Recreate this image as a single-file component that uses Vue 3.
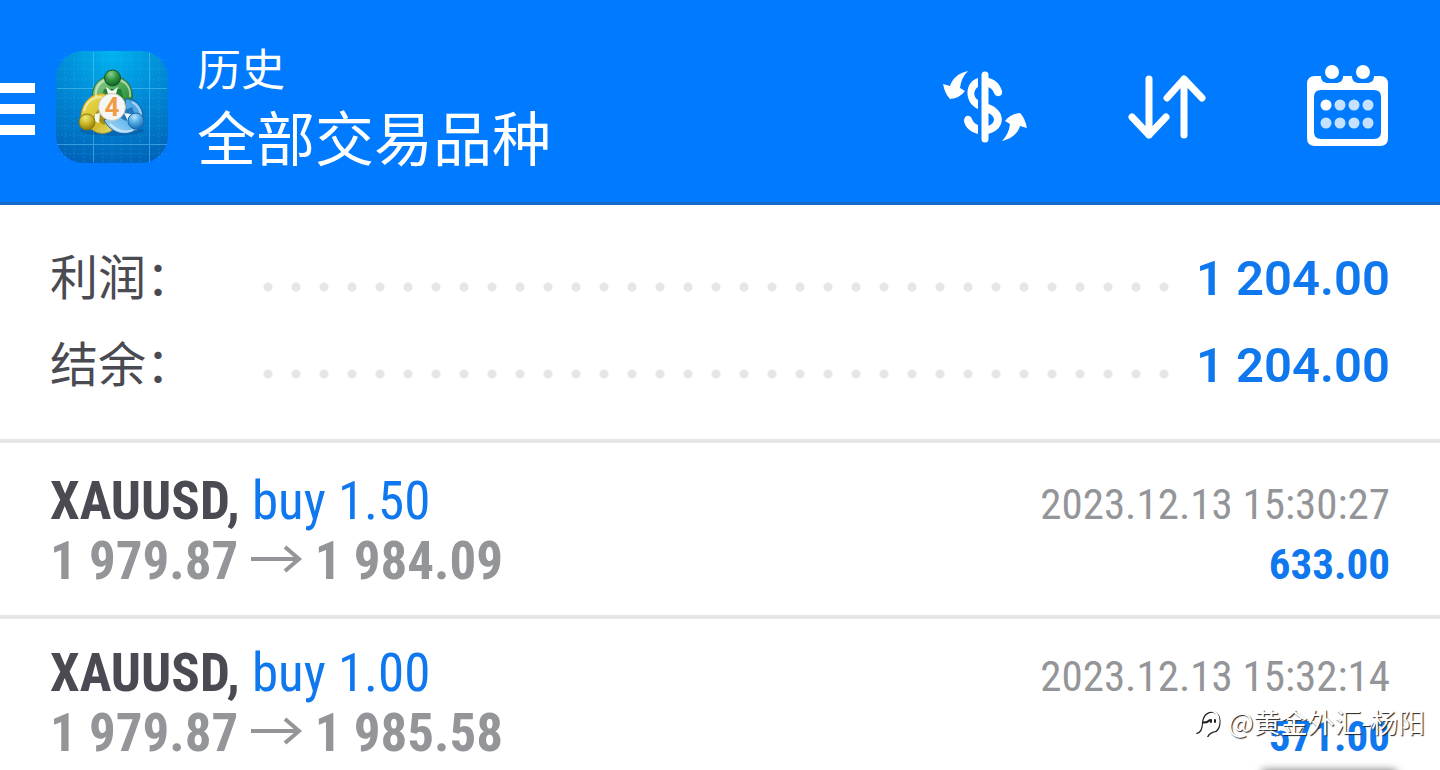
<template>
  <div class="app">
    <header class="toolbar">
      <button class="menu" type="button" aria-label="菜单">
        <svg width="36" height="60" viewBox="0 0 36 60" fill="#fff">
          <rect y="6" width="35" height="10"/>
          <rect y="27" width="35" height="10"/>
          <rect y="48" width="35" height="10"/>
        </svg>
      </button>

      <svg class="logo" width="112" height="112" viewBox="0 0 112 112" aria-hidden="true">
        <defs>
          <radialGradient id="logo-bg" cx="0.5" cy="0" r="1.05">
            <stop offset="0" stop-color="#00b4f0"/>
            <stop offset="0.5" stop-color="#0088d4"/>
            <stop offset="1" stop-color="#0062b8"/>
          </radialGradient>
          <linearGradient id="green" x1="0" y1="0" x2="1" y2="1">
            <stop offset="0" stop-color="#a4d8a0"/>
            <stop offset="0.5" stop-color="#4aa853"/>
            <stop offset="1" stop-color="#187a2c"/>
          </linearGradient>
          <linearGradient id="yellow" x1="0" y1="0" x2="1" y2="1">
            <stop offset="0" stop-color="#f0df4e"/>
            <stop offset="0.6" stop-color="#d2bb2c"/>
            <stop offset="1" stop-color="#f2eda0"/>
          </linearGradient>
          <linearGradient id="blue" x1="1" y1="0" x2="0" y2="1">
            <stop offset="0" stop-color="#3d9ade"/>
            <stop offset="0.5" stop-color="#62b4ea"/>
            <stop offset="1" stop-color="#b4e2fa"/>
          </linearGradient>
          <radialGradient id="head-green" cx="0.4" cy="0.25" r="0.8">
            <stop offset="0" stop-color="#8fd08d"/>
            <stop offset="0.5" stop-color="#2e9440"/>
            <stop offset="1" stop-color="#0d5a20"/>
          </radialGradient>
          <radialGradient id="head-yellow" cx="0.4" cy="0.25" r="0.8">
            <stop offset="0" stop-color="#f4e878"/>
            <stop offset="0.5" stop-color="#c8b526"/>
            <stop offset="1" stop-color="#84720a"/>
          </radialGradient>
          <radialGradient id="head-blue" cx="0.4" cy="0.25" r="0.8">
            <stop offset="0" stop-color="#b8e4fc"/>
            <stop offset="0.5" stop-color="#4aa6e2"/>
            <stop offset="1" stop-color="#1466ae"/>
          </radialGradient>
        </defs>
        <rect width="112" height="112" rx="27" fill="url(#logo-bg)"/>
        <g stroke="#5cc4f4" stroke-dasharray="2 2" opacity="0.2">
          <path v-for="p in minorGrid" :key="'m' + p" :d="`M${p} 1V111M1 ${p}H111`"/>
        </g>
        <path d="M37.500 1V111M93.500 1V111M1 37.500H111M1 93.500H111" stroke="#6ccaf6" opacity="0.5"/>
        <ellipse cx="56" cy="80" rx="32" ry="5" fill="#04498c" opacity="0.35"/>
        <path d="M37 54C34 41 39 28 51 26H62C74 29 79 41 75 55L64 62H48Z" fill="url(#green)" stroke="#2d6a24"/>
        <path d="M45 50L48 38H65L68 50L56 58Z" fill="#1d7f35"/>
        <path d="M49 43C38 41 26 49 25 66C26 73 32 77 37 79C43 84 52 83 58 78L68 66L50 62Z" fill="url(#yellow)" stroke="#b99c28"/>
        <path d="M37 66L44 56L56 66L48 74Z" fill="#a88d14"/>
        <path d="M69 48C79 47 87 55 87 66C88 74 84 79 78 80C68 86 55 82 48 69L60 64L70 60Z" fill="url(#blue)" stroke="#1a5fa4"/>
        <path d="M67 60L76 56L79 63L70 70L63 66Z" fill="#2278c0"/>
        <path d="M50 36L56 40L62 36L60 43H52ZM39 63L44 62L43 72L38 70ZM68 62L75 63L73 72Z" fill="#f4f8f2"/>
        <path d="M28 60C30 51 37 46 46 46M40 46C39 36 44 31 50 29M63 29C71 31 75 38 74 46M76 51C82 54 85 60 85 65M54 73C60 80 70 82 77 79" fill="none" stroke="#fff" stroke-width="2" opacity="0.5"/>
        <circle cx="56.500" cy="27" r="8" fill="url(#head-green)" stroke="#0d5522"/>
        <circle cx="31" cy="71" r="8" fill="url(#head-yellow)" stroke="#8a780c"/>
        <circle cx="80" cy="70" r="8" fill="url(#head-blue)" stroke="#1768ae"/>
        <circle cx="56" cy="56" r="13.500" fill="#f5f6f6" stroke="#cfc9ad"/>
        <text x="56" y="65" text-anchor="middle" class="logo-num">4</text>
      </svg>

      <div class="titles">
        <p class="section">历史</p>
        <h1 class="symbol">全部交易品种</h1>
      </div>

      <nav class="actions">
        <button type="button" aria-label="货币">
          <svg width="84" height="74" viewBox="0 0 84 74">
            <path d="M42 5V69" stroke="#fff" stroke-width="7" stroke-linecap="round"/>
            <path d="M35 8C21 12 21 33 35 39V30C30 27 30 20 35 17ZM45 8C52 9 57 14 59 21C60 27 53 28 51 23C50 20 48 18 45 17ZM45 34C64 40 63 60 45 64V56C53 53 53 46 45 43ZM35 64C27 62 22 57 21 51C21 45 27 44 29 49C30 52 32 54 35 55Z" fill="#fff"/>
            <g fill="#fff">
              <path d="M25 1C15 3 9 9 7 16L0 14Q2 24 7 29Q17 28 22 21L17 18Q18 8 25 1Z"/>
              <path d="M25 1C15 3 9 9 7 16L0 14Q2 24 7 29Q17 28 22 21L17 18Q18 8 25 1Z" transform="rotate(180 42 36)"/>
            </g>
          </svg>
        </button>
        <button type="button" aria-label="排序">
          <svg width="78" height="68" viewBox="0 -2 78 68" fill="none" stroke="#fff" stroke-width="7" stroke-linecap="round" stroke-linejoin="round">
            <path d="M21 4V60M4 42L21 60L38 42M56 60V4M39 23L56 4L74 23"/>
          </svg>
        </button>
        <button type="button" aria-label="日期">
          <svg width="81" height="84" viewBox="0 0 81 84">
            <path d="M8 11H14C14 16 17 18 21 18H29C33 18 36 16 36 11H45C45 16 48 18 52 18H60C64 18 67 16 67 11H73Q81 11 81 19V73Q81 81 73 81H8Q0 81 0 73V19Q0 11 8 11ZM14 25Q7 25 7 32V67Q7 74 14 74H67Q74 74 74 67V32Q74 25 67 25Z" fill="#fff" fill-rule="evenodd"/>
            <circle cx="25" cy="7" r="7" fill="#fff"/>
            <circle cx="56" cy="7" r="7" fill="#fff"/>
            <circle v-for="(d, i) in calendarDots" :key="i" :cx="d.x" :cy="d.y" r="5.500" :fill="i === 0 ? '#fff' : '#c4e2ff'"/>
          </svg>
        </button>
      </nav>
    </header>

    <dl class="summary">
      <div v-for="row in summary" :key="row.label" class="summary-row">
        <dt>{{ row.label }}</dt>
        <dd class="leader" aria-hidden="true"></dd>
        <dd class="total">{{ row.value }}</dd>
      </div>
    </dl>

    <ul class="deals">
      <li v-for="deal in deals" :key="deal.time" class="deal">
        <div class="line">
          <span><b>{{ deal.symbol }},</b> <span class="side">{{ deal.side }}</span></span>
          <time>{{ deal.time }}</time>
        </div>
        <div class="line">
          <span class="prices">
            {{ deal.open }}
            <svg class="arrow" width="52" height="28" viewBox="0 0 52 28" fill="none" stroke="#949599" stroke-width="4">
              <path d="M0 14H48M34 2L48 14L34 26"/>
            </svg>
            {{ deal.close }}
          </span>
          <span class="profit">{{ deal.profit }}</span>
        </div>
      </li>
    </ul>

    <div class="sheet-edge"></div>
    <div class="watermark">
      <svg width="26" height="30" viewBox="0 0 26 30" fill="none" stroke-linecap="round">
        <path d="M1 26C5 25 6 22 6 16C7 8 12 4 18 5C25 8 25 20 20 24C16 25 13 26 12 29M6 15C9 16 12 15 14 13M15 13V15M19 13V15" stroke="#222" stroke-width="2"/>
        <path d="M0 25C4 24 5 21 5 15C6 7 11 3 17 4C24 7 24 19 19 23C15 24 12 25 11 28" stroke="#fff" stroke-width="2"/>
      </svg>
      <span>@黄金外汇-杨阳</span>
    </div>
  </div>
</template>

<script setup>
const summary = [
  { label: '利润：', value: '1 204.00' },
  { label: '结余：', value: '1 204.00' },
]

const deals = [
  { symbol: 'XAUUSD', side: 'buy 1.50', open: '1 979.87', close: '1 984.09', time: '2023.12.13 15:30:27', profit: '633.00' },
  { symbol: 'XAUUSD', side: 'buy 1.00', open: '1 979.87', close: '1 985.58', time: '2023.12.13 15:32:14', profit: '571.00' },
]

const minorGrid = [9, 18, 28, 47, 56, 65, 75, 84, 103]

// 4 x 2 day marks inside the calendar icon
const calendarDots = Array.from({ length: 8 }, (_, i) => ({
  x: 19 + (i % 4) * 14,
  y: 40 + Math.floor(i / 4) * 18,
}))
</script>

<style>
body { margin: 0; background: #fff; }
</style>

<style scoped>
.app {
  position: relative;
  display: flex;
  flex-direction: column;
  height: 100vh;
  overflow: hidden;
  font-family: Roboto, "Noto Sans CJK SC", sans-serif;
  color: #4a4a52;
}
.toolbar {
  display: flex;
  flex: none;
  align-items: center;
  padding: 12px 52px 0 0;
  min-height: 190px;
  background: #007aff;
  border-bottom: 3px solid #126acb;
  color: #fff;
}
button {
  display: flex;
  padding: 0;
  border: 0;
  background: none;
  cursor: pointer;
}
.logo { margin: 0 29px 0 20px; }
.logo-num { font: 700 26px Roboto, sans-serif; fill: #f29a45; }
.titles { flex: 1; padding-top: 4px; }
.section, .symbol { margin: 0; font-weight: 400; }
.section { font-size: 44px; line-height: 64px; }
.symbol { font-size: 59px; line-height: 76px; }
.actions { display: flex; align-items: center; gap: 101px; }

.summary {
  flex: none;
  margin: 0;
  padding: 30px 50px;
  border-bottom: 4px solid #e6e6e6;
}
.summary-row {
  display: flex;
  align-items: center;
  height: 87px;
}
dt { width: 204px; font-size: 48px; line-height: 60px; }
dd { margin: 0; }
.leader {
  flex: 1;
  height: 28px;
  margin: 16px 20px 0 0;
  background: radial-gradient(circle, #e6e6e6 4px, transparent 5px) 0 0 / 28px 28px repeat-x;
}
.total { font-size: 49px; font-weight: 600; color: #0f78ee; }

.deals { flex: none; margin: 0; padding: 4px 0 0; list-style: none; }
.deal {
  padding: 24px 50px;
  border-bottom: 4px solid #e6e6e6;
  font-family: "Roboto Condensed", Roboto, sans-serif;
}
.line {
  display: flex;
  align-items: baseline;
  justify-content: space-between;
  height: 60px;
  font-size: 53px;
  line-height: 60px;
}
.side, .profit { color: #0f78ee; }
.prices { font-weight: 700; color: #949599; }
.arrow { vertical-align: 6px; }
time { font-size: 43px; color: #949599; }
.profit { font-size: 43px; font-weight: 700; }

.sheet-edge {
  position: absolute;
  right: 44px;
  bottom: -10px;
  width: 134px;
  height: 10px;
  box-shadow: 0 0 8px #777;
}
.watermark {
  position: absolute;
  right: 15px;
  bottom: 28px;
  display: flex;
  align-items: center;
  gap: 6px;
  font: 27px/40px "Noto Sans CJK SC", sans-serif;
  color: #fff;
  text-shadow: 1px 1px 1px #222;
}
</style>
